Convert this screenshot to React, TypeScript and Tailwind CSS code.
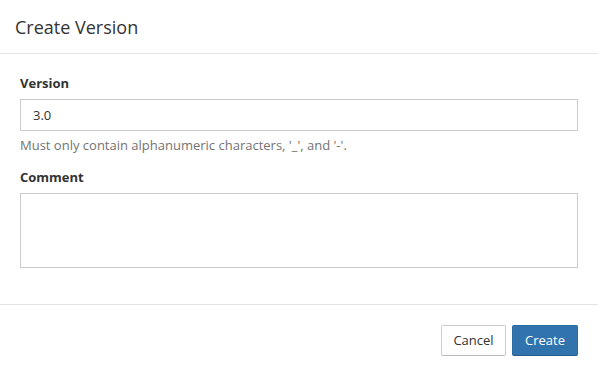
import React from "react";

export default function App() {
  return (
    <div
      className="w-[598px] h-[376px] bg-white text-[#333] flex flex-col"
      style={{ fontFamily: '"Open Sans", sans-serif' }}
    >
      <div className="h-[54px] px-[15px] border-b border-[#e5e5e5] flex items-center">
        <h4 className="text-[18px] leading-[23px] mt-[1px]">Create Version</h4>
      </div>

      <div className="px-[20px] pt-[20px] pb-[20px] flex-1">
        <label className="block text-[13px] leading-[18px] font-bold mb-[7px]">
          Version
        </label>
        <input
          defaultValue="3.0"
          className="block w-full h-[32px] px-[12px] text-[13px] border border-[#ccc] outline-none text-[#333]"
        />
        <p className="text-[13px] leading-[18px] text-[#737373] mt-[5px]">
          Must only contain alphanumeric characters, '_', and '-'.
        </p>
        <label className="block text-[13px] leading-[18px] font-bold mt-[14px] mb-[7px]">
          Comment
        </label>
        <textarea className="block w-full h-[75px] px-[12px] py-[6px] text-[13px] border border-[#ccc] outline-none resize-none" />
      </div>

      <div className="border-t border-[#e5e5e5] px-[20px] pt-[20px] pb-[20px] flex justify-end gap-[6px]">
        <button className="h-[31px] w-[65px] text-[13px] border border-[#ccc] border-b-[#bbb] rounded-[2px] bg-white text-[#333]">
          Cancel
        </button>
        <button className="h-[31px] w-[66px] text-[13px] border border-[#2d6ca2] border-b-[#275b8a] rounded-[2px] bg-[#3174ad] text-white">
          Create
        </button>
      </div>
    </div>
  );
}
